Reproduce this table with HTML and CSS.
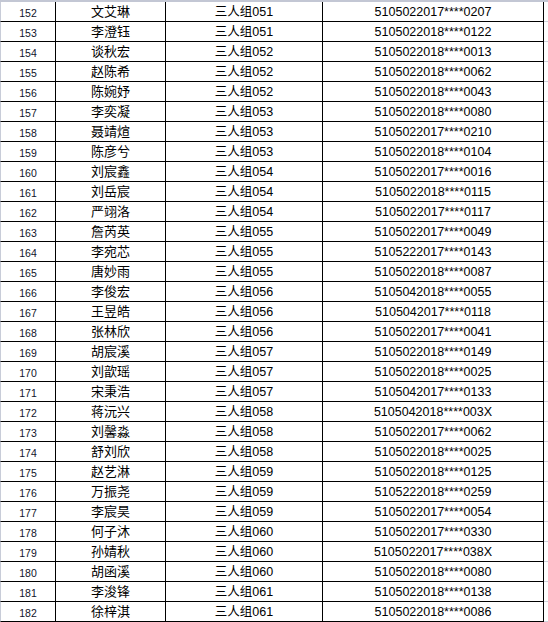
FILE: index.html
```html
<!DOCTYPE html>
<html lang="zh">
<head>
<meta charset="utf-8">
<link rel="stylesheet" href="styles.css">
</head>
<body>
<div class="sheet">
<div class="row first"><div class="c num">152</div><div class="c name">文艾琳</div><div class="c grp">三人组051</div><div class="c id">5105022017****0207</div><div class="c pad"></div></div>
<div class="row"><div class="c num">153</div><div class="c name">李澄钰</div><div class="c grp">三人组051</div><div class="c id">5105022018****0122</div><div class="c pad"></div></div>
<div class="row"><div class="c num">154</div><div class="c name">谈秋宏</div><div class="c grp">三人组052</div><div class="c id">5105022018****0013</div><div class="c pad"></div></div>
<div class="row"><div class="c num">155</div><div class="c name">赵陈希</div><div class="c grp">三人组052</div><div class="c id">5105022018****0062</div><div class="c pad"></div></div>
<div class="row"><div class="c num">156</div><div class="c name">陈婉妤</div><div class="c grp">三人组052</div><div class="c id">5105022018****0043</div><div class="c pad"></div></div>
<div class="row"><div class="c num">157</div><div class="c name">李奕凝</div><div class="c grp">三人组053</div><div class="c id">5105022018****0080</div><div class="c pad"></div></div>
<div class="row"><div class="c num">158</div><div class="c name">聂靖煊</div><div class="c grp">三人组053</div><div class="c id">5105022017****0210</div><div class="c pad"></div></div>
<div class="row"><div class="c num">159</div><div class="c name">陈彦兮</div><div class="c grp">三人组053</div><div class="c id">5105022018****0104</div><div class="c pad"></div></div>
<div class="row"><div class="c num">160</div><div class="c name">刘宸鑫</div><div class="c grp">三人组054</div><div class="c id">5105022017****0016</div><div class="c pad"></div></div>
<div class="row"><div class="c num">161</div><div class="c name">刘岳宸</div><div class="c grp">三人组054</div><div class="c id">5105022018****0115</div><div class="c pad"></div></div>
<div class="row"><div class="c num">162</div><div class="c name">严翊洛</div><div class="c grp">三人组054</div><div class="c id">5105022017****0117</div><div class="c pad"></div></div>
<div class="row"><div class="c num">163</div><div class="c name">詹芮英</div><div class="c grp">三人组055</div><div class="c id">5105022017****0049</div><div class="c pad"></div></div>
<div class="row"><div class="c num">164</div><div class="c name">李宛芯</div><div class="c grp">三人组055</div><div class="c id">5105222017****0143</div><div class="c pad"></div></div>
<div class="row"><div class="c num">165</div><div class="c name">唐妙雨</div><div class="c grp">三人组055</div><div class="c id">5105022018****0087</div><div class="c pad"></div></div>
<div class="row"><div class="c num">166</div><div class="c name">李俊宏</div><div class="c grp">三人组056</div><div class="c id">5105042018****0055</div><div class="c pad"></div></div>
<div class="row"><div class="c num">167</div><div class="c name">王昱皓</div><div class="c grp">三人组056</div><div class="c id">5105042017****0118</div><div class="c pad"></div></div>
<div class="row"><div class="c num">168</div><div class="c name">张林欣</div><div class="c grp">三人组056</div><div class="c id">5105022017****0041</div><div class="c pad"></div></div>
<div class="row"><div class="c num">169</div><div class="c name">胡宸溪</div><div class="c grp">三人组057</div><div class="c id">5105022018****0149</div><div class="c pad"></div></div>
<div class="row"><div class="c num">170</div><div class="c name">刘歆瑶</div><div class="c grp">三人组057</div><div class="c id">5105022018****0025</div><div class="c pad"></div></div>
<div class="row"><div class="c num">171</div><div class="c name">宋秉浩</div><div class="c grp">三人组057</div><div class="c id">5105042017****0133</div><div class="c pad"></div></div>
<div class="row"><div class="c num">172</div><div class="c name">蒋沅兴</div><div class="c grp">三人组058</div><div class="c id">5105042018****003X</div><div class="c pad"></div></div>
<div class="row"><div class="c num">173</div><div class="c name">刘馨淼</div><div class="c grp">三人组058</div><div class="c id">5105022017****0062</div><div class="c pad"></div></div>
<div class="row"><div class="c num">174</div><div class="c name">舒刘欣</div><div class="c grp">三人组058</div><div class="c id">5105022018****0025</div><div class="c pad"></div></div>
<div class="row"><div class="c num">175</div><div class="c name">赵艺淋</div><div class="c grp">三人组059</div><div class="c id">5105022018****0125</div><div class="c pad"></div></div>
<div class="row"><div class="c num">176</div><div class="c name">万振尧</div><div class="c grp">三人组059</div><div class="c id">5105222018****0259</div><div class="c pad"></div></div>
<div class="row"><div class="c num">177</div><div class="c name">李宸昊</div><div class="c grp">三人组059</div><div class="c id">5105022017****0054</div><div class="c pad"></div></div>
<div class="row"><div class="c num">178</div><div class="c name">何子沐</div><div class="c grp">三人组060</div><div class="c id">5105022017****0330</div><div class="c pad"></div></div>
<div class="row"><div class="c num">179</div><div class="c name">孙婧秋</div><div class="c grp">三人组060</div><div class="c id">5105022017****038X</div><div class="c pad"></div></div>
<div class="row"><div class="c num">180</div><div class="c name">胡函溪</div><div class="c grp">三人组060</div><div class="c id">5105022018****0080</div><div class="c pad"></div></div>
<div class="row"><div class="c num">181</div><div class="c name">李浚锋</div><div class="c grp">三人组061</div><div class="c id">5105022018****0138</div><div class="c pad"></div></div>
<div class="row"><div class="c num">182</div><div class="c name">徐梓淇</div><div class="c grp">三人组061</div><div class="c id">5105022018****0086</div><div class="c pad"></div></div>
</div>
</body>
</html>
```

FILE: styles.css
```css
html, body {
  margin: 0;
  padding: 0;
  background: #ffffff;
}

.sheet {
  width: 548px;
  height: 622px;
  overflow: hidden;
  font-family: "Liberation Sans", "Noto Sans CJK SC", sans-serif;
  color: #000;
}

.row {
  display: grid;
  grid-template-columns: 56px 110px 157px 221px 1fr;
  height: 20px;
  box-sizing: border-box;
}

.row.first {
  height: 22px;
  border-top: 2px solid #c3c7d4;
}

.c {
  box-sizing: border-box;
  display: flex;
  align-items: flex-end;
  justify-content: center;
  border-right: 1px solid #000;
  border-bottom: 1px solid #000;
  padding-bottom: 1px;
  line-height: 16px;
  white-space: nowrap;
}

.num {
  border-left: 1px solid #c8ccd8;
  font-size: 10.5px;
  color: #10132a;
  padding-bottom: 0;
}

.name {
  font-size: 13px;
}

.grp {
  font-size: 12.5px;
}

.id {
  font-size: 12.5px;
}

.pad {
  border-right: none;
  border-bottom: 1px solid #d0d3dc;
}
```
